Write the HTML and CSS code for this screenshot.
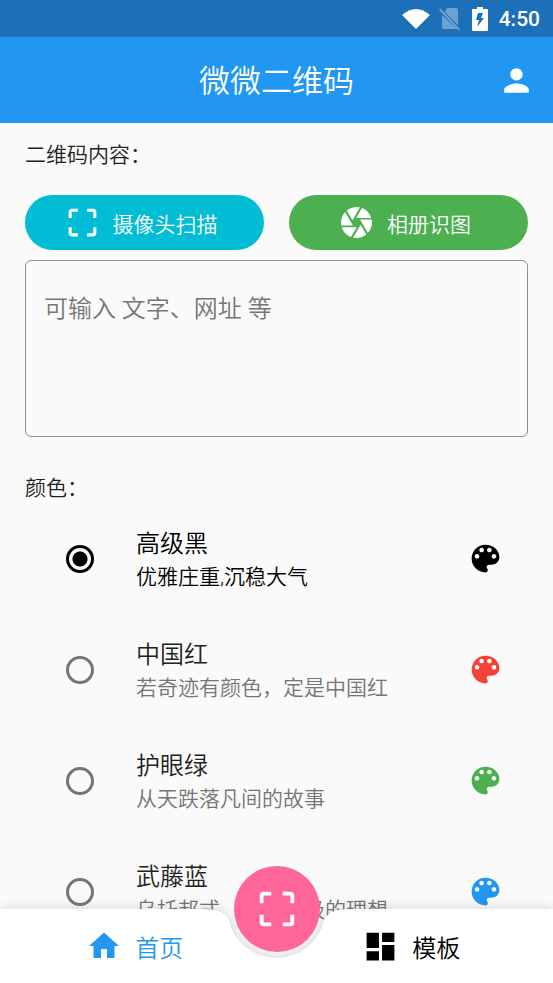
FILE: index.html
```html
<!DOCTYPE html>
<html lang="zh-CN">
<head>
<meta charset="utf-8">
<meta name="viewport" content="width=device-width, initial-scale=1">
<title>微微二维码</title>
<link rel="stylesheet" href="styles.css">
</head>
<body>
<svg class="sprite" aria-hidden="true">
  <symbol id="scan" viewBox="0 0 24 24"><path d="M3 5v4h2V5h4V3H5c-1.100 0-2 .9-2 2zm2 10H3v4c0 1.100.9 2 2 2h4v-2H5v-4zm14 4h-4v2h4c1.100 0 2-.9 2-2v-4h-2v4zm0-16h-4v2h4v4h2V5c0-1.100-.9-2-2-2z"/></symbol>
  <symbol id="palette" viewBox="0 0 24 24"><path d="M12 3c-4.970 0-9 4.030-9 9s4.030 9 9 9c.83 0 1.500-.67 1.500-1.500 0-.39-.15-.74-.39-1.010-.23-.26-.38-.61-.38-.99 0-.83.67-1.500 1.500-1.500H16c2.760 0 5-2.240 5-5 0-4.420-4.030-8-9-8zm-5.500 9c-.83 0-1.500-.67-1.500-1.500S5.670 9 6.500 9 8 9.670 8 10.500 7.330 12 6.500 12zm3-4C8.670 8 8 7.330 8 6.500S8.670 5 9.500 5s1.500.67 1.500 1.500S10.330 8 9.500 8zm5 0c-.83 0-1.500-.67-1.500-1.500S13.670 5 14.500 5s1.500.67 1.500 1.500S15.330 8 14.500 8zm3 4c-.83 0-1.500-.67-1.500-1.500S16.670 9 17.500 9s1.500.67 1.500 1.500-.67 1.500-1.500 1.500z"/></symbol>
</svg>
<div class="app">
  <div class="status">
    <svg class="wifi" viewBox="0 0 28 20"><path d="M0 6Q14-6 28 6L14 20z"/></svg>
    <svg class="sim" viewBox="0 0 22 24"><path d="M8 1h9q2 0 2 2v15L6 5zM3 8l15 14H5q-2 0-2-2zM0 3l1.500-1.500L21 22l-1.500 1.500z"/></svg>
    <svg class="battery" viewBox="0 0 16 24"><path fill-rule="evenodd" d="M5 0h6v2h4q1 0 1 1v20q0 1-1 1H1q-1 0-1-1V3q0-1 1-1h4zM6 6L4 13h3l-2 7 7-9H9l2-5z"/></svg>
    <time>4:50</time>
  </div>
  <header class="bar">
    <h1>微微二维码</h1>
    <button class="account" type="button" aria-label="账户"><svg class="icon" viewBox="0 0 24 24"><path d="M12 12c2.210 0 4-1.790 4-4s-1.790-4-4-4-4 1.790-4 4 1.790 4 4 4zm0 2c-2.670 0-8 1.340-8 4v2h16v-2c0-2.660-5.330-4-8-4z"/></svg></button>
  </header>
  <main class="content">
    <label class="heading" for="text">二维码内容：</label>
    <div class="actions">
      <button class="pill camera" type="button"><svg class="icon"><use href="#scan"/></svg>摄像头扫描</button>
      <button class="pill album" type="button"><svg class="icon" viewBox="0 0 24 24"><path d="M9.400 10.500l4.770-8.260C13.470 2.090 12.750 2 12 2c-2.400 0-4.600.85-6.320 2.250l3.660 6.350.06-.1zM21.540 9c-.92-2.920-3.150-5.260-6-6.340L11.880 9h9.660zm.26 1h-7.490l.29.5 4.760 8.250C21 16.970 22 14.610 22 12c0-.69-.07-1.350-.2-2zM8.540 12l-3.900-6.750C3.010 7.030 2 9.390 2 12c0 .69.07 1.350.2 2h7.490l-1.150-2zm-6.080 3c.92 2.920 3.150 5.260 6 6.340L12.120 15H2.460zm11.270 0l-3.900 6.760c.7.15 1.420.24 2.170.24 2.400 0 4.600-.85 6.320-2.250l-3.660-6.350-.93 1.600z"/></svg>相册识图</button>
    </div>
    <textarea id="text" class="input" placeholder="可输入 文字、网址 等"></textarea>
    <fieldset class="colors">
      <legend class="heading">颜色：</legend>
      <label class="row">
        <input type="radio" name="color" checked>
        <span class="text"><span class="name">高级黑</span><span class="desc">优雅庄重,沉稳大气</span></span>
        <svg class="icon"><use href="#palette"/></svg>
      </label>
      <label class="row">
        <input type="radio" name="color">
        <span class="text"><span class="name">中国红</span><span class="desc">若奇迹有颜色，定是中国红</span></span>
        <svg class="icon red"><use href="#palette"/></svg>
      </label>
      <label class="row">
        <input type="radio" name="color">
        <span class="text"><span class="name">护眼绿</span><span class="desc">从天跌落凡间的故事</span></span>
        <svg class="icon green"><use href="#palette"/></svg>
      </label>
      <label class="row">
        <input type="radio" name="color">
        <span class="text"><span class="name">武藤蓝</span><span class="desc">乌托邦式　人类终极的理想</span></span>
        <svg class="icon blue"><use href="#palette"/></svg>
      </label>
    </fieldset>
  </main>
  <nav class="tabs">
    <svg class="notch" viewBox="0 0 2000 74" preserveAspectRatio="xMidYMin slice" aria-hidden="true"><path d="M0 0H926Q949 0 952.500 12A49 49 0 0 0 1047.500 12Q1051 0 1074 0H2000V74H0z"/></svg>
    <a class="tab active" href="#home"><svg class="icon home" viewBox="0 0 24 24"><path d="M10 20v-6h4v6h5v-8h3L12 3 2 12h3v8z"/></svg>首页</a>
    <a class="tab" href="#templates"><svg class="icon" viewBox="0 0 24 24"><path d="M3 13h8V3H3v10zm0 8h8v-6H3v6zm10 0h8V11h-8v10zm0-18v6h8V3h-8z"/></svg>模板</a>
    <button class="fab" type="button" aria-label="扫描"><svg class="icon large"><use href="#scan"/></svg></button>
  </nav>
</div>
</body>
</html>
```
FILE: styles.css
```css
* { box-sizing: border-box; }
body {
  margin: 0;
  background: #fafafa;
  color: #212121;
  font-family: Roboto, "Noto Sans CJK SC", sans-serif;
  font-size: 21px;
  font-weight: 350;
}
button, textarea { font: inherit; }
button { border: 0; padding: 0; cursor: pointer; }
.sprite { display: none; }
.icon { display: block; flex: none; width: 37px; height: 37px; fill: currentColor; }
.app { position: relative; display: flex; flex-direction: column; height: 100vh; overflow: hidden; }

.status {
  flex: none;
  display: flex;
  align-items: center;
  justify-content: flex-end;
  height: 37px;
  padding-right: 13px;
  background: #1b70b7;
  color: #fff;
  font-weight: 500;
}
.status svg { fill: #fff; }
.wifi { width: 28px; height: 20px; margin-right: 9px; }
.sim { width: 22px; height: 24px; margin-right: 11px; opacity: .35; }
.battery { width: 16px; height: 24px; margin-right: 11px; }

.bar {
  flex: none;
  display: grid;
  grid-template-columns: 37px 1fr 37px;
  align-items: center;
  height: 86px;
  padding: 0 18px;
  background: #2196f3;
  color: #fff;
}
.bar h1 { grid-column: 2; margin: 0; padding-bottom: 3px; font-size: 31px; font-weight: inherit; text-align: center; }
.account { background: none; color: inherit; }

.content { flex: 1; min-height: 0; overflow-y: auto; scrollbar-width: none; padding: 16px 25px 74px; }
.heading { display: block; padding: 2px 0 0; line-height: 29px; }
.actions { display: grid; grid-template-columns: 1fr 1fr; gap: 25px; margin: 25px 0 10px; }
.pill {
  display: flex;
  align-items: center;
  justify-content: center;
  gap: 12px;
  height: 55px;
  padding-right: 8px;
  border-radius: 28px;
  color: #fff;
}
.camera { background: #00bcd4; }
.album { background: #4caf50; }
.input {
  display: block;
  width: 100%;
  height: 177px;
  padding: 30px 18px;
  border: 1px solid #8e8e8e;
  border-radius: 6px;
  background: transparent;
  color: inherit;
  font-size: 24px;
  line-height: 36px;
  resize: none;
}
.input::placeholder { color: #757575; opacity: 1; }

.colors { margin: 35px 0 0; padding: 0; border: 0; }
.row { display: flex; align-items: center; height: 111px; padding: 0 24px 0 41px; }
.row input {
  appearance: none;
  flex: none;
  width: 28px;
  height: 28px;
  margin: 0 42px 0 0;
  border: 3px solid #757575;
  border-radius: 50%;
}
.row input:checked { border-color: #000; background: radial-gradient(circle, #000 7px, transparent 8px); }
.text { flex: 1; display: grid; padding-top: 4px; line-height: 33px; }
.name { font-size: 24px; }
.desc { color: #757575; }
.row:has(:checked), .row:has(:checked) .desc { color: #000; }
.red { color: #f44336; }
.green { color: #4caf50; }
.blue { color: #2196f3; }

.tabs { position: absolute; inset: auto 0 0; display: grid; grid-template-columns: 1fr 1fr; height: 74px; }
.notch {
  position: absolute;
  inset: 0;
  width: 100%;
  height: 100%;
  fill: #fff;
  filter: drop-shadow(0 0 6px rgba(0, 0, 0, .16));
}
.tab {
  position: relative;
  display: flex;
  align-items: center;
  justify-content: center;
  gap: 13px;
  padding-right: 7px;
  color: #000;
  font-size: 24px;
  text-decoration: none;
}
.tab.active { color: #2196f3; }
.home { width: 36px; height: 36px; }
.fab {
  position: absolute;
  top: -43px;
  left: calc(50% - 43px);
  display: grid;
  place-items: center;
  width: 86px;
  height: 86px;
  border-radius: 50%;
  background: #ff6699;
  color: #fff;
}
.large { width: 46px; height: 46px; }
```
